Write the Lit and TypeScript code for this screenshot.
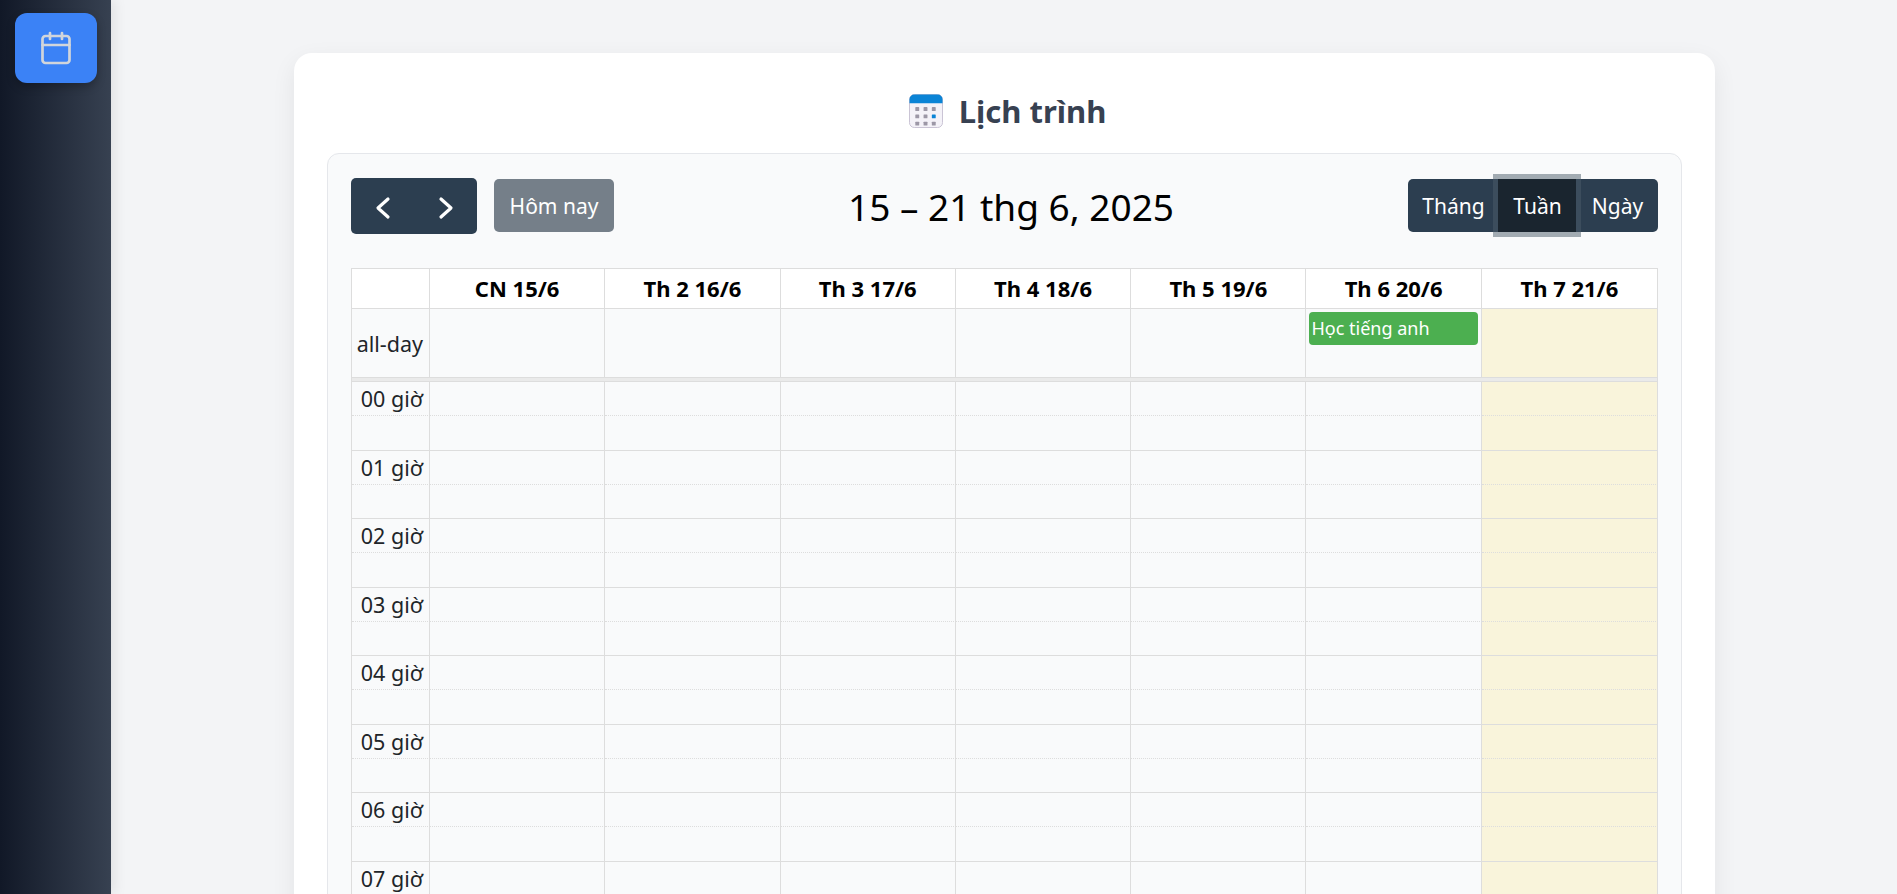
import { LitElement, html, css, svg } from "lit";
import { customElement } from "lit/decorators.js";

const DAYS = ["CN 15/6", "Th 2 16/6", "Th 3 17/6", "Th 4 18/6", "Th 5 19/6", "Th 6 20/6", "Th 7 21/6"];
const HOURS = Array.from({ length: 24 }, (_, i) => `${String(i).padStart(2, "0")} giờ`);

const dots = [0, 1, 2].flatMap((r) => [0, 1, 2].map((c) => [c, r]));

@customElement("app-root")
export class AppRoot extends LitElement {
  static styles = css`
    :host {
      display: flex;
      height: 100vh;
      overflow: hidden;
      background: #f3f4f6;
      font-family: "Noto Sans", "Open Sans", sans-serif;
    }
    .sidebar {
      flex: 0 0 111px;
      box-sizing: border-box;
      padding: 13px 14px 0 15px;
      background: linear-gradient(90deg, #111827, #374151);
      box-shadow: 4px 0 12px rgba(0, 0, 0, 0.08);
      z-index: 1;
    }
    .side-btn {
      height: 70px;
      border-radius: 12px;
      background: #3b82f6;
      display: flex;
      align-items: center;
      justify-content: center;
      box-shadow: 0 4px 8px rgba(0, 0, 0, 0.25);
    }
    .side-btn svg {
      width: 36px;
      height: 36px;
      fill: none;
      stroke: #d1d5db;
      stroke-width: 1.8;
      stroke-linecap: round;
      stroke-linejoin: round;
    }
    main {
      flex: 1;
      min-width: 0;
      padding: 53px 0 40px 1px;
      overflow: hidden;
    }
    .card {
      width: 1421px;
      margin: 0 auto;
      box-sizing: border-box;
      padding: 33px;
      background: #fff;
      border-radius: 18px;
      box-shadow: 0 8px 24px rgba(0, 0, 0, 0.07);
    }
    .heading {
      display: flex;
      align-items: center;
      justify-content: center;
      gap: 16px;
      height: 49px;
      margin: 0 0 18px;
      padding-left: 6px;
      font-size: 31px;
      font-weight: 700;
      color: #374151;
    }
    .heading svg {
      width: 34px;
      height: 34px;
      flex: none;
    }
    .panel {
      background: #f9fafb;
      border: 1px solid #e5e7eb;
      border-radius: 12px;
      padding: 24px 23px;
    }
    .toolbar {
      display: flex;
      align-items: center;
      justify-content: space-between;
      height: 56px;
      margin-bottom: 34px;
    }
    .left {
      display: flex;
      align-items: flex-start;
      gap: 17px;
    }
    .title {
      font-size: 37px;
      font-weight: 400;
      color: #000;
    }
    .group {
      display: flex;
      border-radius: 5px;
      background: #2c3e50;
    }
    .nav {
      height: 56px;
      width: 126px;
    }
    .nav span {
      flex: 1;
      display: flex;
      align-items: center;
      justify-content: center;
      padding-top: 3px;
    }
    .nav svg {
      width: 16px;
      height: 24px;
      fill: none;
      stroke: #fff;
      stroke-width: 3.2;
      stroke-linecap: round;
      stroke-linejoin: round;
    }
    .today {
      height: 53px;
      width: 120px;
      margin-top: 1px;
      display: flex;
      align-items: center;
      justify-content: center;
      background: #757f89;
      border-radius: 5px;
      color: #fff;
      font-size: 21px;
    }
    .views {
      height: 53px;
      width: 250px;
      margin-bottom: 1px;
      color: #fff;
      font-size: 21px;
    }
    .views span {
      box-sizing: border-box;
      display: flex;
      align-items: center;
      justify-content: center;
      padding-left: 1px;
    }
    .views .m {
      width: 90px;
    }
    .views .w {
      width: 78px;
      background: #1a252f;
      box-shadow: 0 0 0 5px rgba(76, 91, 106, 0.5);
      position: relative;
    }
    .views .d {
      flex: 1;
    }
    .grid {
      display: grid;
      grid-template-columns: 78px repeat(6, 175.3px) minmax(0, 1fr);
      border-left: 1px solid #ddd;
    }
    .head {
      border-top: 1px solid #ddd;
      background: #fff;
    }
    .cell {
      box-sizing: border-box;
      border-right: 1px solid #ddd;
      border-bottom: 1px solid #ddd;
    }
    .head .cell {
      height: 40px;
      padding-bottom: 2px;
      display: flex;
      align-items: center;
      justify-content: center;
      font-size: 22px;
      font-weight: 700;
      color: #000;
    }
    .allday .cell {
      height: 69px;
      padding: 3px;
    }
    .label {
      display: flex;
      justify-content: flex-end;
      font-size: 21.5px;
      color: #212529;
      padding-right: 6px;
      white-space: nowrap;
    }
    .allday .label {
      align-items: center;
      padding: 0 6px 0 0;
    }
    .today-col {
      background: #f9f4db;
    }
    .event {
      height: 33px;
      box-sizing: border-box;
      padding: 0 2px;
      border-radius: 4px;
      background: #4caf50;
      color: #fff;
      font-size: 18px;
      line-height: 32px;
    }
    .divider {
      height: 4px;
      box-sizing: border-box;
      background: #eaeaea;
      border-left: 1px solid #ddd;
      border-right: 1px solid #ddd;
      border-bottom: 1px solid #ddd;
    }
    .body .cell {
      height: 34.25px;
    }
    .body .half {
      border-bottom: 1px dotted #ddd;
    }
    .body .label {
      line-height: 34px;
    }
  `;

  render() {
    return html`
      <aside class="sidebar">
        <div class="side-btn">
          <svg viewBox="0 0 24 24" aria-hidden="true">
            <rect x="3" y="4" width="18" height="18" rx="2"></rect>
            <path d="M16 2v4M8 2v4M3 10h18"></path>
          </svg>
        </div>
      </aside>
      <main>
        <section class="card">
          <h1 class="heading">
            <svg viewBox="0.5 0.5 35 35" aria-hidden="true">
              <rect x="1" y="1" width="34" height="34" rx="5" fill="#f4f2f8" stroke="#c8c2d4" stroke-width="1"></rect>
              <path d="M1 10V6a5 5 0 0 1 5-5h24a5 5 0 0 1 5 5v4z" fill="#0a84d6"></path>
              ${dots.map(
                ([c, r]) => svg`<rect x=${7 + c * 8.5} y=${14 + r * 7.5} width="4" height="4" rx="0.6"
                  fill=${c === 2 && r === 1 ? "#0a84d6" : "#9c97a6"}></rect>`
              )}
            </svg>
            <span>Lịch trình</span>
          </h1>
          <div class="panel">
            <div class="toolbar">
              <div class="left">
                <div class="group nav">
                  <span><svg viewBox="0 0 16 24"><path d="M13 3l-10 9 10 9"></path></svg></span>
                  <span><svg viewBox="0 0 16 24"><path d="M3 3l10 9-10 9"></path></svg></span>
                </div>
                <div class="today">Hôm nay</div>
              </div>
              <h2 class="title">15 – 21 thg 6, 2025</h2>
              <div class="group views">
                <span class="m">Tháng</span>
                <span class="w">Tuần</span>
                <span class="d">Ngày</span>
              </div>
            </div>
            <div class="grid head">
              <div class="cell"></div>
              ${DAYS.map((d) => html`<div class="cell">${d}</div>`)}
            </div>
            <div class="grid allday">
              <div class="cell label">all-day</div>
              ${DAYS.map(
                (_, i) => html`<div class="cell ${i === 6 ? "today-col" : ""}">
                  ${i === 5 ? html`<div class="event">Học tiếng anh</div>` : ""}
                </div>`
              )}
            </div>
            <div class="divider"></div>
            <div class="grid body">
              ${HOURS.map(
                (h) => html`
                  <div class="cell half label">${h}</div>
                  ${DAYS.map((_, i) => html`<div class="cell half ${i === 6 ? "today-col" : ""}"></div>`)}
                  <div class="cell"></div>
                  ${DAYS.map((_, i) => html`<div class="cell ${i === 6 ? "today-col" : ""}"></div>`)}
                `
              )}
            </div>
          </div>
        </section>
      </main>
    `;
  }
}
